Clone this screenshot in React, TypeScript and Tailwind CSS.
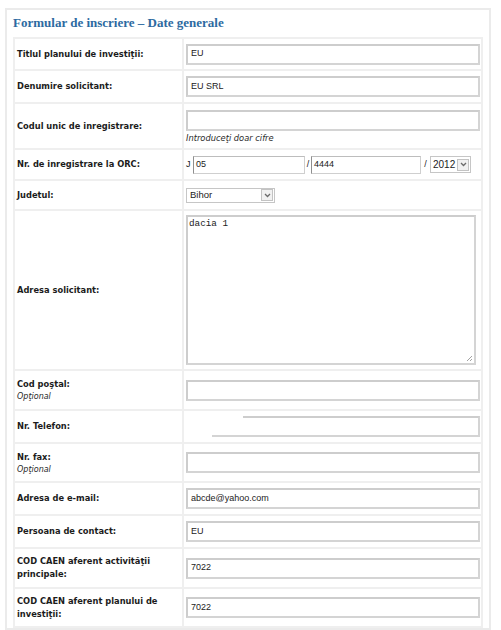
import type { ReactNode } from 'react'

const labelFont = { fontFamily: '"DejaVu Sans", Verdana, sans-serif' }
const inputFont = { fontFamily: '"Liberation Sans", Arial, sans-serif' }

type RowProps = {
  label: ReactNode
  optional?: boolean
  className: string
  children: ReactNode
  first?: boolean
}

const Row = ({ label, optional, className, children, first }: RowProps) => (
  <div className={`flex ${first ? '' : 'border-t-2 border-[#efefef]'} ${className}`}>
    <div className="w-[169px] shrink-0 border-r-2 border-[#efefef] pl-[2px] pr-2 flex flex-col justify-center" style={labelFont}>
      <div className="text-[8.3px] leading-[13px] font-bold text-[#1c1c1c]">{label}</div>
      {optional && <div className="text-[8px] leading-[11px] italic text-[#2a2a2a]">Opţional</div>}
    </div>
    <div className="flex-1 pl-[2px] flex flex-col justify-center">{children}</div>
  </div>
)

const TextBox = ({ value = '' }: { value?: string }) => (
  <div
    className="w-[294px] h-[21px] border-2 border-[#d4d4d4] border-t-[#cdcdcd] border-l-[#cdcdcd] bg-white pl-[3px] flex items-center text-[9px] text-[#222]"
    style={inputFont}
  >
    {value}
  </div>
)

const Arrow = () => (
  <div className="w-[12px] h-[12px] border border-[#c3c3c3] bg-[#f1f1f1] flex items-center justify-center">
    <svg width="7" height="5" viewBox="0 0 7 5">
      <polyline points="1,1 3.5,3.5 6,1" fill="none" stroke="#6b6b6b" strokeWidth="1.3" />
    </svg>
  </div>
)

export default function App() {
  return (
    <div className="bg-white w-[501px] h-[630px] overflow-hidden pt-[8px] pl-[5px]">
      <div className="w-[486px] border-2 border-[#ebebeb] px-[6px]">
        <div className="h-[27px] flex items-center pb-[1px]">
          <h1 className="text-[13px] font-bold text-[#2d6aa1]" style={{ fontFamily: '"Liberation Serif", "Times New Roman", serif' }}>
            Formular de inscriere – Date generale
          </h1>
        </div>

        <div className="border-2 border-[#efefef]">
          <Row first label="Titlul planului de investiţii:" className="h-[30px]">
            <TextBox value="EU" />
          </Row>

          <Row label="Denumire solicitant:" className="h-[33px]">
            <TextBox value="EU SRL" />
          </Row>

          <Row label="Codul unic de inregistrare:" className="h-[46px]">
            <div className="flex flex-col gap-[2px] pt-[1px]">
              <TextBox />
              <div className="text-[8.3px] italic text-[#2a2a2a] leading-[11px]" style={labelFont}>
                Introduceţi doar cifre
              </div>
            </div>
          </Row>

          <Row label="Nr. de inregistrare la ORC:" className="h-[31px]">
            <div className="flex items-center text-[9px] text-[#222]" style={inputFont}>
              <span className="w-[7px]">J</span>
              <div className="w-[112px] h-[18px] border border-[#cfcfcf] border-l-[#8f8f8f] border-t-[#bdbdbd] pl-[2px] flex items-center">05</div>
              <span className="w-[6px] text-center">/</span>
              <div className="w-[110px] h-[18px] border border-[#cfcfcf] border-l-[#8f8f8f] border-t-[#bdbdbd] pl-[2px] flex items-center">4444</div>
              <span className="w-[9px] text-center">/</span>
              <div className="w-[41px] h-[17px] border border-[#c6c6c6] flex items-center justify-between pl-[2px] pr-[1px] text-[10px]">
                <span>2012</span>
                <Arrow />
              </div>
            </div>
          </Row>

          <Row label="Judetul:" className="h-[30px]">
            <div
              className="w-[89px] h-[15px] border border-[#c6c6c6] flex items-center justify-between pl-[3px] pr-[1px] text-[9.5px] text-[#222]"
              style={inputFont}
            >
              <span>Bihor</span>
              <Arrow />
            </div>
          </Row>

          <Row label="Adresa solicitant:" className="h-[160px]">
            <div
              className="relative w-[290px] h-[150px] border-2 border-[#d4d4d4] border-t-[#cdcdcd] border-l-[#cdcdcd] px-[1px] pt-[1px] text-[9.3px] leading-[11px] text-[#222]"
              style={{ fontFamily: '"Liberation Mono", "Courier New", monospace' }}
            >
              dacia 1
              <svg className="absolute right-[1px] bottom-[1px]" width="8" height="8" viewBox="0 0 8 8">
                <line x1="7" y1="2" x2="2" y2="7" stroke="#8a8a8a" strokeWidth="0.8" />
                <line x1="7" y1="5" x2="5" y2="7" stroke="#8a8a8a" strokeWidth="0.8" />
              </svg>
            </div>
          </Row>

          <Row label="Cod poştal:" optional className="h-[40px]">
            <TextBox />
          </Row>

          <Row label="Nr. Telefon:" className="h-[33px]">
            <div className="relative">
              <TextBox />
              <div className="absolute left-0 top-[-1px] w-[57px] h-[12px] bg-white" />
              <div className="absolute left-0 top-[-1px] w-[26px] h-[23px] bg-white" />
            </div>
          </Row>

          <Row label="Nr. fax:" optional className="h-[39px]">
            <TextBox />
          </Row>

          <Row label="Adresa de e-mail:" className="h-[33px]">
            <TextBox value="abcde@yahoo.com" />
          </Row>

          <Row label="Persoana de contact:" className="h-[33px]">
            <TextBox value="EU" />
          </Row>

          <Row label="COD CAEN aferent activităţii principale:" className="h-[40px]">
            <TextBox value="7022" />
          </Row>

          <Row label="COD CAEN aferent planului de investiţii:" className="h-[39px]">
            <TextBox value="7022" />
          </Row>
        </div>
      </div>
    </div>
  )
}
